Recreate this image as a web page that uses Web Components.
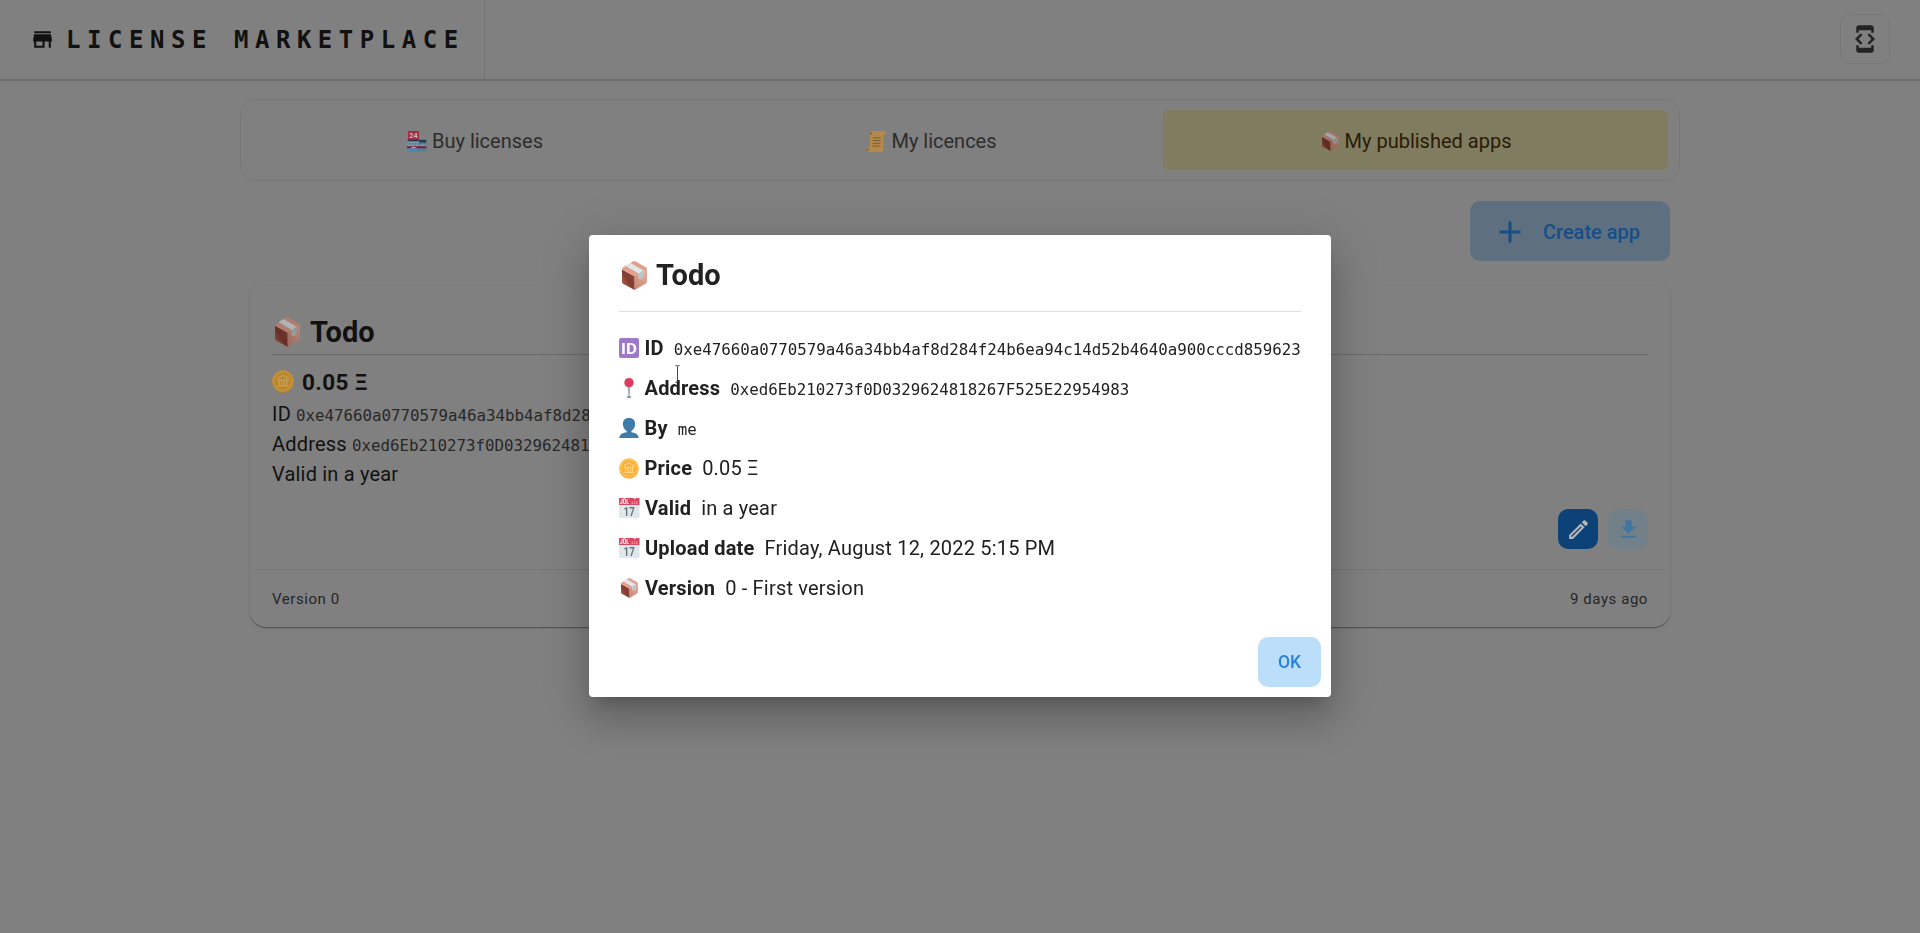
<!DOCTYPE html>
<html lang="en">
<head>
<meta charset="utf-8">
<title>License Marketplace</title>
<style>
html,body{margin:0;height:100%;background:#808080;overflow:hidden}
body{font-family:Roboto,"Liberation Sans",sans-serif;font-size:20px;color:#111}
</style>
</head>
<body>
<market-app></market-app>
<script>
const MONO = '"DejaVu Sans Mono","Liberation Mono",monospace';
const ICONS = {
  store:['0 0 24 24','<path fill="currentColor" d="M12,18H6V14H12M21,14V12L20,7H4L3,12V14H4V20H14V14H18V20H20V14M20,4H4V6H20V4Z"/>'],
  dev:['0 0 24 24','<path fill="currentColor" d="M7 5h10v2h2V3c0-1.1-.9-2-2-2H7c-1.1 0-2 .9-2 2v4h2V5zm8.41 11.59L20 12l-4.59-4.59L14 8.83 17.17 12 14 15.17l1.41 1.42zM10 15.17L6.83 12 10 8.83 8.59 7.41 4 12l4.59 4.59L10 15.17zM17 19H7v-2H5v4c0 1.1.9 2 2 2h10c1.1 0 2-.9 2-2v-4h-2v2z"/>'],
  plus:['0 0 24 24','<path fill="currentColor" d="M19,13H13V19H11V13H5V11H11V5H13V11H19V13Z"/>'],
  pencil:['0 0 24 24','<path fill="currentColor" d="M14.06,9L15,9.94L5.92,19H5V18.08L14.06,9M17.66,3C17.41,3 17.15,3.1 16.96,3.29L15.13,5.12L18.88,8.87L20.71,7.04C21.1,6.65 21.1,6 20.71,5.63L18.37,3.29C18.17,3.09 17.92,3 17.66,3M14.06,6.19L3,17.25V21H6.75L17.81,9.94L14.06,6.19Z"/>'],
  download:['0 0 24 24','<path fill="currentColor" d="M5 20h14v-2H5v2zM19 9h-4V3H9v6H5l7 7 7-7z"/>'],
  box:['0 0 75 88','<defs><linearGradient id="l" x1="0" y1="1" x2="1" y2="0"><stop offset="0" stop-color="#b5705f"/><stop offset=".5" stop-color="#833a30"/><stop offset="1" stop-color="#98503f"/></linearGradient><linearGradient id="r" x1="0" y1="1" x2="1" y2="0"><stop offset="0" stop-color="#c98673"/><stop offset="1" stop-color="#e5b09d"/></linearGradient></defs><path fill="url(#l)" d="M0 26 38 46V88L3 69Q0 67 0 63z"/><path fill="url(#r)" d="M38 46 75 22V62Q75 66 72 68L38 88z"/><path fill="#dfa08d" d="M0 26Q0 22 3 20L34 1Q37 0 40 1L72 19Q75 21 75 23L38 46z"/><path fill="#e2e6e8" d="M11 15 25 6 64 28V49L57 56 50 53V38z"/><path fill="#bcc4c8" d="M50 38 64 28V49L57 56 50 53z"/>'],
  coin:['0 0 64 66','<ellipse cx="32" cy="34" rx="31" ry="31.5" fill="#eda63c"/><circle cx="32" cy="32" r="31" fill="#ffbe48"/><circle cx="32" cy="32" r="24" fill="#f9ae3d"/><path fill="none" stroke="#ffd67d" stroke-width="3.5" d="M17 24Q23 20 32 15Q41 20 47 24V29H17zM21 30V42M28 30V42M36 30V42M43 30V42M16 45H48"/>'],
  id:['0 0 60 60','<rect width="60" height="60" rx="6" fill="#9f79c9"/><text x="30" y="47" text-anchor="middle" font-family="Roboto,sans-serif" font-weight="700" font-size="46" fill="#fff" textLength="48" lengthAdjust="spacingAndGlyphs">ID</text>'],
  pin:['0 0 60 60','<ellipse cx="30" cy="57" rx="7" ry="2.5" fill="#4b5961"/><path fill="#a3b2b8" d="M26 24H34L32 57H28z"/><circle cx="30" cy="14" r="14" fill="#dd3b5b"/>'],
  user:['0 0 60 60','<path fill="#3f7ba8" d="M30 0C43 0 50 8 48 22C47 31 42 36 37 39V43C48 45 58 48 59 60H1C2 48 12 45 23 43V39C18 36 13 31 12 22C10 8 17 0 30 0z"/>'],
  cal:['0 0 62 60','<path fill="#dfe7eb" d="M0 18H62V56Q62 60 58 60H4Q0 60 0 56z"/><path fill="#dc4560" d="M0 0H62V21H0z"/><circle cx="16" cy="1" r="3" fill="#f6dfe3"/><circle cx="48" cy="1" r="3" fill="#f6dfe3"/><text x="2" y="19" font-family="Roboto,sans-serif" font-weight="700" font-size="20" fill="#fff" textLength="29" lengthAdjust="spacingAndGlyphs">JUL</text><path stroke="#f2b3bd" stroke-width="3" stroke-dasharray="4 3" d="M38 12H58M38 17H58"/><text x="31" y="54" text-anchor="middle" font-family="Roboto,sans-serif" font-weight="700" font-size="37" fill="#68757c" textLength="34" lengthAdjust="spacingAndGlyphs">17</text>'],
  shop:['0 0 60 62','<rect x="3" y="0" width="33" height="27" rx="4" fill="#a32a41"/><text x="19.500" y="21" text-anchor="middle" font-family="Roboto,sans-serif" font-weight="700" font-size="22" fill="#c9bcc0">24</text><path fill="#54819d" d="M2 27H58V60H2z"/><path fill="#253d50" d="M2 26H58V30H2zM37 27H58V34H37z"/><path fill="#7d9cae" d="M2 32H36V44H2zM39 38H56V44H39z"/><path stroke="#41667f" stroke-width="4" stroke-dasharray="5 4" d="M5 38H56"/><path fill="#8b1c33" d="M0 45H58V51H0z"/><path fill="#b5b5b7" d="M10 51Q20 42 29 51z"/><path fill="#4f87ad" d="M2 52H30V60Q16 64 2 60z"/>'],
  scroll:['0 0 60 62','<path fill="#b28b4b" d="M14 4Q16 0 22 0H54Q60 0 60 6Q60 12 54 12H52V54Q52 62 44 62H8Q0 62 0 55L4 51H12V10z"/><path fill="#8b6430" d="M12 5Q16 2 19 6Q19 12 14 12zM0 55Q2 51 8 53L8 60Q1 60 0 55z"/><path stroke="#7c5b31" stroke-width="3" d="M20 20H44M20 28H44M20 36H44M20 44H44"/>'],
  ibeam:['0 0 14 54','<path fill="none" stroke="#333" stroke-width="2.600" d="M1 2H5Q7 2 7 5V49Q7 52 5 52H1M13 2H9Q7 2 7 5M13 52H9Q7 52 7 49"/>']
};
function define(name, html){
  const t = document.createElement('template');
  t.innerHTML = html;
  customElements.define(name, class extends HTMLElement{
    constructor(){ super(); this.attachShadow({mode:'open'}).append(t.content.cloneNode(true)); }
  });
}
customElements.define('ui-icon', class extends HTMLElement{
  constructor(){ super(); this.attachShadow({mode:'open'}); }
  connectedCallback(){
    const [vb, body] = ICONS[this.getAttribute('name')];
    const w = this.getAttribute('w'), h = this.getAttribute('h') || w;
    this.shadowRoot.innerHTML = `<style>:host{display:block;flex:none;width:${w}px;height:${h}px}svg{display:block;width:100%;height:100%}</style><svg viewBox="${vb}" preserveAspectRatio="none">${body}</svg>`;
  }
});
define('mono-text', `<style>:host{font:400 15.8px/20px ${MONO};letter-spacing:-.01px;white-space:nowrap}</style><slot></slot>`);
define('app-header', `<style>
:host{display:flex;justify-content:space-between;height:79px;border-bottom:2px solid #6d6d6d}
.brand{box-sizing:border-box;width:485px;border-right:1px solid #727272;display:flex;align-items:center;padding-left:30px;gap:11px}
h1{margin:0;font:700 24px/32px ${MONO};letter-spacing:6.54px;color:#111;white-space:nowrap}
.dev{box-sizing:border-box;width:50px;height:50px;margin:14px 30px 0 0;border:1px solid #787878;border-radius:10px;display:grid;place-items:center}
ui-icon{color:#111}.dev ui-icon{color:#232323}
</style><div class="brand"><ui-icon name="store" w="25"></ui-icon><h1>LICENSE MARKETPLACE</h1></div><div class="dev"><ui-icon name="dev" w="30"></ui-icon></div>`);
define('app-tab', `<style>
:host{box-sizing:border-box;display:flex;align-items:center;justify-content:center;gap:5px;height:60px;border-radius:5px;color:#2d2d2d;white-space:nowrap;padding:2px 4px 0 0}
:host([active]){background:#7f7c60;color:#2a1b07;padding-right:0}
</style><slot name="icon"></slot><span><slot></slot></span>`);
define('tab-bar', `<style>
:host{box-sizing:border-box;display:grid;grid-template-columns:454px 459px 505px;width:1440px;height:82px;margin:18px auto 0;padding:10px 10px 10px 9px;border:1px solid #787878;border-radius:16px}
</style><slot></slot>`);
define('ui-button', `<style>
:host{display:flex;align-items:center;justify-content:center;border-radius:10px;box-sizing:border-box}
:host([kind=create]){width:200px;height:60px;padding:1px 1px 0 0;gap:17px;background:#5e6f7f;color:#144f89;font-weight:500}
:host([kind=edit]),:host([kind=get]){width:40px;height:40px}
:host([kind=edit]){background:#0d4278;color:#b4b8bc}
:host([kind=get]){background:#728089;color:#3f75a2}
:host([kind=ok]){width:63px;height:50px;background:#bbdefb;color:#2a82d8;font-size:17.500px;font-weight:500}
</style><slot></slot>`);
define('license-card', `<style>
:host{box-sizing:border-box;display:flex;flex-direction:column;width:1420px;height:346px;border-radius:16px;margin:20px auto 0;
box-shadow:0 2px 1px -1px rgba(0,0,0,.2),0 1px 1px rgba(0,0,0,.14),0 1px 3px rgba(0,0,0,.12)}
.body{box-sizing:border-box;height:289px;padding:32px 20px 20px;display:flex;flex-direction:column;border-bottom:1px solid #767676;margin:0 2px}
.title{box-sizing:border-box;display:flex;align-items:center;height:42px;padding:0 0 3px 3px;border-bottom:1px solid #6c6c6c;gap:10px;font-size:29px;font-weight:700}
.price{display:flex;align-items:center;gap:8px;height:33px;margin:10px 0 1px;font-size:22.500px;font-weight:700;letter-spacing:.4px}
.row{width:319px;overflow:hidden;line-height:30px;letter-spacing:.19px;white-space:nowrap}
mono-text{color:#282828}
.acts{display:flex;justify-content:flex-end;gap:10px;margin-top:auto}
.foot{flex:1;display:flex;align-items:center;justify-content:space-between;padding:0 22px;font-size:15px;letter-spacing:.56px;color:#262626}
</style><div class="body"><div class="title"><ui-icon name="box" w="25" h="30" style="filter:brightness(.78)"></ui-icon><span>Todo</span></div>
<div class="price"><ui-icon name="coin" w="22" h="23" style="filter:brightness(.76)"></ui-icon><span>0.05 Ξ</span></div>
<div class="row">ID <mono-text>0xe47660a0770579a46a34bb4af8d284f24b6ea94c14d52b4640a900cccd859623</mono-text></div>
<div class="row">Address <mono-text>0xed6Eb210273f0D0329624818267F525E22954983</mono-text></div>
<div class="row">Valid in a year</div>
<div class="acts"><ui-button kind="edit"><ui-icon name="pencil" w="25"></ui-icon></ui-button><ui-button kind="get"><ui-icon name="download" w="25"></ui-icon></ui-button></div></div>
<div class="foot"><span>Version 0</span><span>9 days ago</span></div>`);
define('detail-row', `<style>
:host{display:flex;align-items:center;height:40px;white-space:nowrap;letter-spacing:.19px;color:#212121}
b{font-weight:700;margin:0 10px 0 5.500px}
</style><slot name="icon"></slot><b><slot name="label"></slot></b><span><slot></slot></span>`);
define('info-dialog', `<style>
:host{position:fixed;inset:0;display:grid;place-items:center;padding-bottom:1px}
.panel{position:relative;box-sizing:border-box;width:742px;height:462px;background:#fff;border-radius:4px;padding:24px 10px 10px 30px;display:flex;flex-direction:column;
box-shadow:0 11px 15px -7px rgba(0,0,0,.2),0 24px 38px 3px rgba(0,0,0,.14),0 9px 46px 8px rgba(0,0,0,.12)}
.title{box-sizing:border-box;display:flex;align-items:center;height:53px;padding:0 0 20px 3px;gap:9px;margin-right:20px;border-bottom:1px solid #dedede;font-size:29px;font-weight:700;color:#212121;flex:none}
.rows{margin-top:16px}
.end{margin:auto 0 0 auto}
.cursor{position:absolute;left:86px;top:130px}
</style><div class="panel"><div class="title"><ui-icon name="box" w="25" h="29"></ui-icon><span>Todo</span></div>
<div class="rows">
<detail-row><ui-icon slot="icon" name="id" w="20"></ui-icon><span slot="label">ID</span><mono-text>0xe47660a0770579a46a34bb4af8d284f24b6ea94c14d52b4640a900cccd859623</mono-text></detail-row>
<detail-row><ui-icon slot="icon" name="pin" w="20"></ui-icon><span slot="label">Address</span><mono-text>0xed6Eb210273f0D0329624818267F525E22954983</mono-text></detail-row>
<detail-row><ui-icon slot="icon" name="user" w="20"></ui-icon><span slot="label">By</span><mono-text>me</mono-text></detail-row>
<detail-row><ui-icon slot="icon" name="coin" w="20" h="21"></ui-icon><span slot="label">Price</span>0.05 Ξ</detail-row>
<detail-row><ui-icon slot="icon" name="cal" w="20.500" h="20"></ui-icon><span slot="label">Valid</span>in a year</detail-row>
<detail-row><ui-icon slot="icon" name="cal" w="20.500" h="20"></ui-icon><span slot="label">Upload date</span>Friday, August 12, 2022 5:15 PM</detail-row>
<detail-row><ui-icon slot="icon" name="box" w="17" h="20" style="margin:0 2px 0 1.500px"></ui-icon><span slot="label">Version</span>0 - First version</detail-row>
</div><ui-button class="end" kind="ok">OK</ui-button><ui-icon class="cursor" name="ibeam" w="5" h="18"></ui-icon></div>`);
define('market-app', `<style>:host{display:block}.tools{display:flex;justify-content:flex-end;width:1420px;margin:20px auto 0}</style>
<app-header></app-header>
<tab-bar>
<app-tab><ui-icon slot="icon" name="shop" w="20" h="21"></ui-icon>Buy licenses</app-tab>
<app-tab><ui-icon slot="icon" name="scroll" w="20" h="21"></ui-icon>My licences</app-tab>
<app-tab active><ui-icon slot="icon" name="box" w="17" h="20" style="filter:brightness(.72);margin:0 1px 0 2px"></ui-icon>My published apps</app-tab>
</tab-bar>
<div class="tools"><ui-button kind="create"><ui-icon name="plus" w="36" h="36" style="margin-left:-7px;margin-right:-7px"></ui-icon><span style="margin-left:5px">Create app</span></ui-button></div>
<license-card></license-card>
<info-dialog></info-dialog>`);
</script>
</body>
</html>
